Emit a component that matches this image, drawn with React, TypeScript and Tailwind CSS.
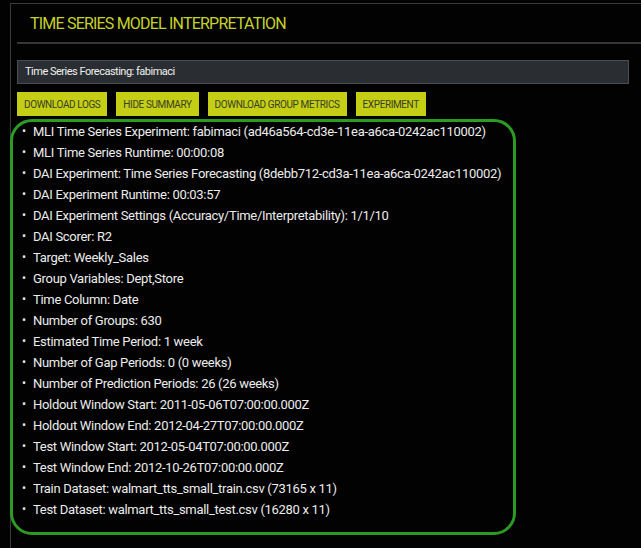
const ITEMS = [
  'MLI Time Series Experiment: fabimaci (ad46a564-cd3e-11ea-a6ca-0242ac110002)',
  'MLI Time Series Runtime: 00:00:08',
  'DAI Experiment: Time Series Forecasting (8debb712-cd3a-11ea-a6ca-0242ac110002)',
  'DAI Experiment Runtime: 00:03:57',
  'DAI Experiment Settings (Accuracy/Time/Interpretability): 1/1/10',
  'DAI Scorer: R2',
  'Target: Weekly_Sales',
  'Group Variables: Dept,Store',
  'Time Column: Date',
  'Number of Groups: 630',
  'Estimated Time Period: 1 week',
  'Number of Gap Periods: 0 (0 weeks)',
  'Number of Prediction Periods: 26 (26 weeks)',
  'Holdout Window Start: 2011-05-06T07:00:00.000Z',
  'Holdout Window End: 2012-04-27T07:00:00.000Z',
  'Test Window Start: 2012-05-04T07:00:00.000Z',
  'Test Window End: 2012-10-26T07:00:00.000Z',
  'Train Dataset: walmart_tts_small_train.csv (73165 x 11)',
  'Test Dataset: walmart_tts_small_test.csv (16280 x 11)',
]

const BUTTONS = ['Download Logs', 'Hide Summary', 'Download Group Metrics', 'Experiment']

export default function App() {
  return (
    <div
      className="w-[641px] h-[548px] overflow-hidden bg-[#020202] pt-[3px] pl-[10px]"
      style={{ fontFamily: 'Roboto, "Liberation Sans", sans-serif' }}
    >
      <div className="h-[600px] border-l border-t border-[#3a3a3a] pl-[6px]">
        {/* header */}
        <div className="border-b-2 border-[#363636] h-[40px] pl-[13px] pt-[10px]">
          <h1 className="text-[16px] leading-[20px] text-[#c6d12a] uppercase tracking-[-0.8px]">
            Time Series Model Interpretation
          </h1>
        </div>

        <div className="mt-[16px] w-[612px] h-[24px] bg-[#2a2e32] border border-[#4a4e52] px-[7px] flex items-center">
          <span className="text-[11px] text-[#f0f0f0] tracking-[-0.5px]">
            Time Series Forecasting: fabimaci
          </span>
        </div>

        <div className="mt-[8px] flex gap-[9px]">
          {BUTTONS.map(b => (
            <button
              key={b}
              className="h-[24px] px-[7px] bg-[#c3ce14] text-[#3b3d24] text-[10px] uppercase tracking-[-0.4px]"
            >
              {b}
            </button>
          ))}
        </div>

        {/* summary */}
        <div className="ml-[-7px] mt-[3px] w-[506px] h-[416px] border-[3px] border-[#2b9b22] rounded-[22px] pl-[9px]">
          <ul className="-mt-[1px] text-[13px] leading-[21px] text-[#ececec] tracking-[-0.3px]">
            {ITEMS.map(item => (
              <li key={item} className="flex items-center whitespace-nowrap">
                <span className="w-[11px] shrink-0 text-[12px]">•</span>
                <span>{item}</span>
              </li>
            ))}
          </ul>
        </div>
      </div>
    </div>
  )
}
